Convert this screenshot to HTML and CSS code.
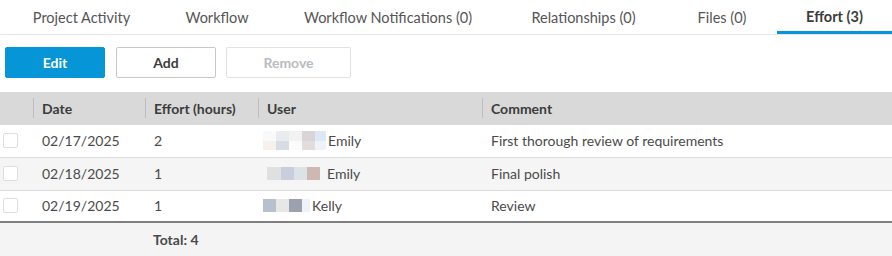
FILE: index.html
```html
<!DOCTYPE html>
<html lang="en">
<head>
    <meta charset="UTF-8">
    <meta name="viewport" content="width=device-width, initial-scale=1.0">
    <title>Effort</title>
    <link rel="stylesheet" href="styles.css">
</head>
<body>
    <nav class="tabs">
        <a class="tab">Project Activity</a>
        <a class="tab">Workflow</a>
        <a class="tab">Workflow Notifications (0)</a>
        <a class="tab">Relationships (0)</a>
        <a class="tab">Files (0)</a>
        <a class="tab active">Effort (3)</a>
    </nav>

    <div class="toolbar">
        <button class="btn btn-primary">Edit</button>
        <button class="btn">Add</button>
        <button class="btn btn-disabled" disabled>Remove</button>
    </div>

    <table class="grid">
        <colgroup>
            <col class="c-check">
            <col class="c-date">
            <col class="c-effort">
            <col class="c-user">
            <col>
        </colgroup>
        <thead>
            <tr>
                <th></th>
                <th><span class="sep"></span>Date</th>
                <th><span class="sep"></span>Effort (hours)</th>
                <th><span class="sep"></span>User</th>
                <th><span class="sep"></span>Comment</th>
            </tr>
        </thead>
        <tbody>
            <tr>
                <td><span class="check"></span></td>
                <td>02/17/2025</td>
                <td>2</td>
                <td>
                    <div class="user">
                        <span class="blur tall">
                            <i class="b1"></i><i class="b2"></i><i class="b3"></i><i class="b4"></i><i class="b5"></i>
                        </span>
                        Emily
                    </div>
                </td>
                <td>First thorough review of requirements</td>
            </tr>
            <tr class="alt">
                <td><span class="check"></span></td>
                <td>02/18/2025</td>
                <td>1</td>
                <td>
                    <div class="user">
                        <span class="blur shift">
                            <i class="b6"></i><i class="b7"></i><i class="b8"></i><i class="b9"></i>
                        </span>
                        Emily
                    </div>
                </td>
                <td>Final polish</td>
            </tr>
            <tr>
                <td><span class="check"></span></td>
                <td>02/19/2025</td>
                <td>1</td>
                <td>
                    <div class="user">
                        <span class="blur">
                            <i class="b10"></i><i class="b11"></i><i class="b12"></i><i class="b13"></i>
                        </span>
                        Kelly
                    </div>
                </td>
                <td>Review</td>
            </tr>
        </tbody>
        <tfoot>
            <tr>
                <td></td>
                <td></td>
                <td class="total">Total: 4</td>
                <td></td>
                <td></td>
            </tr>
        </tfoot>
    </table>
</body>
</html>
```

FILE: styles.css
```css
* { margin: 0; padding: 0; box-sizing: border-box; }
body {
    font-family: Lato, 'Noto Sans', Arial, sans-serif;
    font-size: 14px;
    color: #3c3c3c;
    background: #fff;
    width: 892px;
    overflow: hidden;
}

/* tabs */
.tabs {
    display: flex; height: 35px; border-bottom: 1px solid #e6e6e6; padding-left: 5px;
}
.tab {
    display: flex; align-items: center; justify-content: center;
    padding: 1px 30px 1px; color: #555; text-decoration: none; font-size: 14.5px; white-space: nowrap;
}
.tab:nth-child(1) { width: 153px; }
.tab:nth-child(2) { width: 118px; }
.tab:nth-child(3) { width: 224px; }
.tab:nth-child(4) { width: 167px; }
.tab:nth-child(5) { width: 110px; }
.tab.active {
    width: 115px; color: #3c3c3c; font-weight: 700; border-bottom: 3px solid #0696d7; padding: 1px 0 0;
}

/* toolbar */
.toolbar { display: flex; gap: 11px; padding: 12px 5px 14px; }
.btn {
    height: 31px; width: 100px; border: 1px solid #c8c8c8; border-radius: 2px; background: #fff;
    font-family: inherit; font-size: 14px; font-weight: 700; color: #3c3c3c;
}
.btn-primary { background: #0696d7; border-color: #0696d7; color: #fff; }
.btn-disabled { width: 125px; margin-left: -1px; border-color: #e2e2e2; color: #b9bcc0; }

/* table */
.grid { width: 100%; border-collapse: collapse; table-layout: fixed; }
.c-check { width: 33px; }
.c-date { width: 112px; }
.c-effort { width: 113px; }
.c-user { width: 224px; }
.grid th {
    position: relative; height: 33px; background: #d9d9d9; text-align: left;
    font-weight: 700; padding-left: 9px; color: #3c3c3c;
}
.sep {
    position: absolute; left: 0; top: 6px; bottom: 7px; border-left: 1px solid #bdbdbd;
}
.grid td { height: 32px; padding-left: 9px; color: #4a4a4a; white-space: nowrap; }
.grid tbody tr { border-bottom: 1px solid #dcdcdc; }
.grid tbody tr:last-child { border-bottom: 2px solid #808080; }
.grid tbody tr.alt { background: #f5f5f5; }
.grid tbody tr.alt td { height: 33px; }
.grid tbody td:first-child { padding-left: 3px; }
.check {
    display: block; width: 15px; height: 15px; border: 1px solid #dedede; border-radius: 2px; background: #fff;
}
.grid tfoot td { background: #f4f4f4; height: 34px; }
.grid tfoot td.total { font-weight: 700; padding-left: 8px; }

/* redacted user avatars */
.user { display: flex; align-items: center; gap: 2px; margin-left: -4px; }
.blur { display: flex; height: 13px; }
.blur i { display: block; width: 12px; height: 100%; }
.blur.tall { height: 19px; }
.blur.shift { margin-left: 4px; margin-right: 5px; }
.b1 { background: linear-gradient(#f9f9f9 55%, #f6f1ec 55%); width: 13px !important; }
.b2 { background: linear-gradient(#e9ecee 55%, #d8dde4 55%); width: 13px !important; }
.b3 { background: linear-gradient(#f2f2f2 55%, #fbfbfb 55%); width: 13px !important; }
.b4 { background: linear-gradient(#d8d4d8 55%, #e2dcdc 55%); width: 13px !important; }
.b5 { background: linear-gradient(#dde8f5 55%, #eef3f9 55%); width: 11px !important; }
.b6 { background: #dfe1e0; width: 14px !important; }
.b7 { background: #c9cedc; width: 13px !important; }
.b8 { background: #dde2e6; width: 13px !important; }
.b9 { background: #cdb9b1; width: 13px !important; }
.b10 { background: #b8c0d0; width: 13px !important; }
.b11 { background: #e7e7e6; width: 13px !important; }
.b12 { background: #9ca1ad; width: 13px !important; }
.b13 { background: #eef3f9; width: 8px !important; }
```
